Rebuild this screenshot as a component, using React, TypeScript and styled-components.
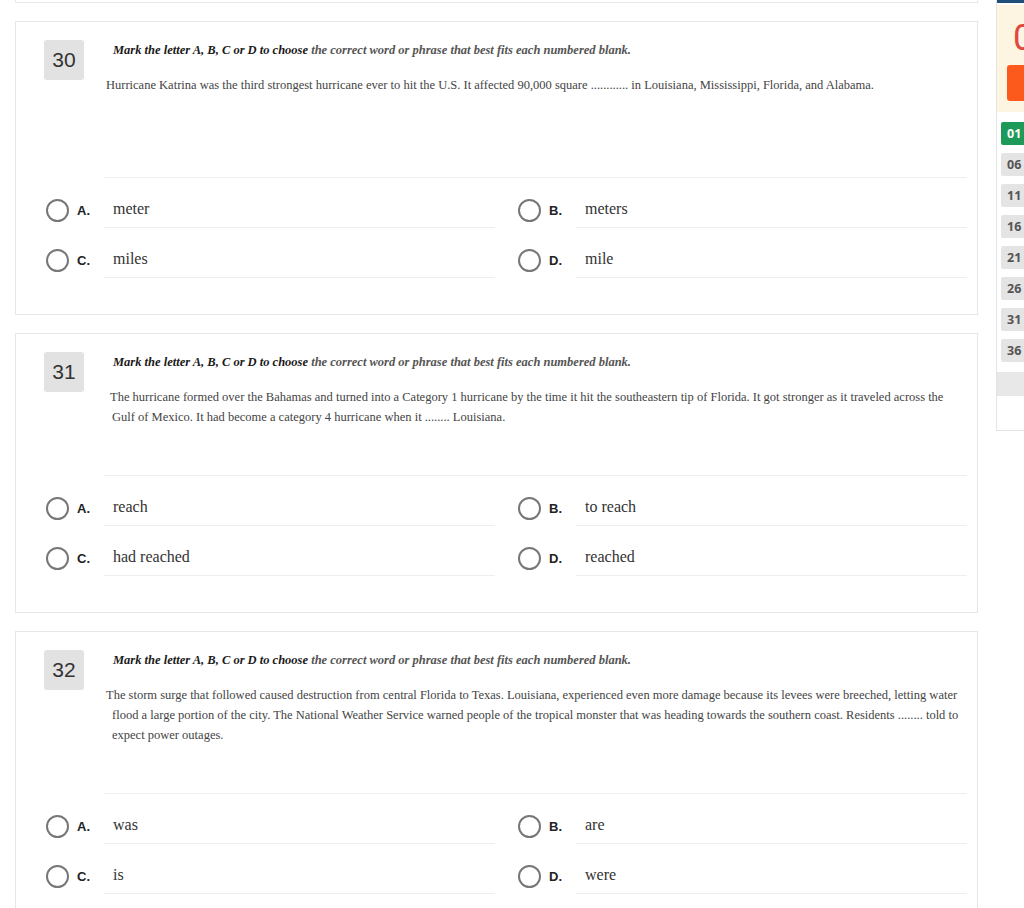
import React from 'react'
import styled, { createGlobalStyle } from 'styled-components'

const GlobalStyle = createGlobalStyle`
  html, body {
    margin: 0;
    padding: 0;
    background: #fff;
    overflow: hidden;
  }
  body {
    font-family: "Liberation Sans", Arial, sans-serif;
    color: #333;
  }
`

type Question = {
  num: number
  passage: string
  indent: number
  extra: number
  options: string[]
}

const questions: Question[] = [
  {
    num: 30,
    passage: 'Hurricane Katrina was the third strongest hurricane ever to hit the U.S. It affected 90,000 square ............ in Louisiana, Mississippi, Florida, and Alabama.',
    indent: -6,
    extra: 34,
    options: ['meter', 'meters', 'miles', 'mile']
  },
  {
    num: 31,
    passage: 'The hurricane formed over the Bahamas and turned into a Category 1 hurricane by the time it hit the southeastern tip of Florida. It got stronger as it traveled across the Gulf of Mexico. It had become a category 4 hurricane when it ........ Louisiana.',
    indent: -2,
    extra: 0,
    options: ['reach', 'to reach', 'had reached', 'reached']
  },
  {
    num: 32,
    passage: 'The storm surge that followed caused destruction from central Florida to Texas. Louisiana, experienced even more damage because its levees were breeched, letting water flood a large portion of the city. The National Weather Service warned people of the tropical monster that was heading towards the southern coast. Residents ........ told to expect power outages.',
    indent: -6,
    extra: 0,
    options: ['was', 'are', 'is', 'were']
  }
]

const letters = ['A', 'B', 'C', 'D']

const App = () => {
  const numbers = Array.from({ length: 40 }, (_, i) => String(i + 1).padStart(2, '0'))

  return (
    <>
      <GlobalStyle />
      <Page>
        <Main>
          <PrevCardTail />
          {questions.map(q => (
            <Card key={q.num}>
              <Header>
                <Badge>{q.num}</Badge>
                <Body>
                  <Instruction>
                    <strong>Mark the letter A, B, C or D to choose</strong> the correct word or phrase that best fits each numbered blank.
                  </Instruction>
                  <Passage indent={q.indent} extra={q.extra}>{q.passage}</Passage>
                  <Separator />
                </Body>
              </Header>
              <Options>
                {q.options.map((opt, i) => (
                  <Option key={opt}>
                    <Radio />
                    <Letter>{letters[i]}.</Letter>
                    <OptionText>{opt}</OptionText>
                  </Option>
                ))}
              </Options>
            </Card>
          ))}
        </Main>
        <Sidebar>
          <TopBar />
          <TimerBox>
            <Timer>00:44:18</Timer>
            <SubmitButton>Nộp bài</SubmitButton>
          </TimerBox>
          <NumberGrid>
            {numbers.map(n => (
              <NumButton key={n} done={n === '01'}>{n}</NumButton>
            ))}
          </NumberGrid>
          <FooterBar />
          <SidebarBottom />
        </Sidebar>
      </Page>
    </>
  )
}

export default App

const Page = styled.div`
  display: flex;
  align-items: flex-start;
  width: 1300px;
  height: 908px;
  overflow: hidden;
`

const Main = styled.main`
  width: 963px;
  margin-left: 15px;
  flex-shrink: 0;
`

const PrevCardTail = styled.div`
  height: 2px;
  border: 1px solid #e8e8e8;
  border-top: none;
  margin-bottom: 18px;
`

const Card = styled.section`
  border: 1px solid #e6e6e6;
  padding: 18px 10px 36px 28px;
  margin-bottom: 18px;
  background: #fff;
`

const Header = styled.div`
  display: flex;
  align-items: flex-start;
  gap: 20px;
`

const Badge = styled.div`
  width: 40px;
  height: 40px;
  flex-shrink: 0;
  border-radius: 3px;
  background: #e2e2e2;
  color: #333;
  font-family: "Liberation Sans", Arial, sans-serif;
  font-size: 21px;
  display: flex;
  align-items: center;
  justify-content: center;
`

const Body = styled.div`
  flex: 1;
  min-width: 0;
`

const Instruction = styled.p`
  margin: 1px 0 0;
  padding-left: 9px;
  font-family: "Liberation Serif", "Times New Roman", serif;
  font-style: italic;
  font-weight: bold;
  font-size: 12.5px;
  line-height: 18px;
  color: #555;

  strong {
    color: #1a1a1a;
  }
`

const Passage = styled.p<{ indent: number; extra: number }>`
  margin: 16px 0 0;
  padding-left: 8px;
  padding-right: 3px;
  text-indent: ${p => p.indent}px;
  padding-bottom: ${p => 48 + p.extra}px;
  font-family: "Liberation Serif", "Times New Roman", serif;
  font-size: 12.5px;
  line-height: 20px;
  color: #444;
`

const Separator = styled.div`
  height: 1px;
  background: #eeeeee;
`

const Options = styled.div`
  display: grid;
  grid-template-columns: 1fr 1fr;
  column-gap: 21px;
`

const Option = styled.div`
  display: flex;
  align-items: flex-start;
  height: 50px;
`

const Radio = styled.span`
  width: 19px;
  height: 19px;
  margin: 21px 0 0 2px;
  border: 2px solid #777;
  border-radius: 50%;
  flex-shrink: 0;
`

const Letter = styled.span`
  width: 27px;
  margin: 23px 0 0 8px;
  font-family: "Liberation Sans", Arial, sans-serif;
  font-weight: bold;
  font-size: 13px;
  line-height: 20px;
  color: #222;
`

const OptionText = styled.div`
  flex: 1;
  box-sizing: border-box;
  height: 50px;
  padding: 21px 0 0 9px;
  border-bottom: 1px solid #eeeeee;
  font-family: "Liberation Serif", "Times New Roman", serif;
  font-size: 16px;
  line-height: 20px;
  color: #333;
`

const Sidebar = styled.aside`
  width: 260px;
  margin-left: 18px;
  flex-shrink: 0;
  border-left: 1px solid #e4e4e4;
  border-right: 1px solid #e4e4e4;
`

const TopBar = styled.div`
  height: 3px;
  background: #1f4e79;
`

const TimerBox = styled.div`
  margin-top: 2px;
  background: #fdf5e2;
  padding: 13px 10px 10px;
  height: 84px;
`

const Timer = styled.div`
  padding-left: 6px;
  font-family: "Roboto", "Liberation Sans", sans-serif;
  font-size: 36px;
  line-height: 40px;
  color: #e2483f;
`

const SubmitButton = styled.div`
  margin-top: 7px;
  height: 36px;
  border-radius: 3px;
  background: #fb5a1c;
  color: #fff;
  font-family: "Roboto", "Liberation Sans", sans-serif;
  font-weight: bold;
  font-size: 14px;
  display: flex;
  align-items: center;
  justify-content: center;
`

const NumberGrid = styled.div`
  display: grid;
  grid-template-columns: repeat(5, 36px);
  column-gap: 8px;
  row-gap: 8px;
  padding: 10px 4px 0;
`

const NumButton = styled.div<{ done: boolean }>`
  height: 23px;
  border-radius: 2px;
  background: ${p => (p.done ? '#1d9a57' : '#e4e4e4')};
  color: ${p => (p.done ? '#fff' : '#555')};
  font-family: "Open Sans", "Liberation Sans", sans-serif;
  font-weight: bold;
  font-size: 12.5px;
  line-height: 23px;
  padding-left: 6px;
`

const FooterBar = styled.div`
  margin-top: 10px;
  height: 24px;
  background: #e8e8e8;
`

const SidebarBottom = styled.div`
  height: 34px;
  border-bottom: 1px solid #e4e4e4;
`
